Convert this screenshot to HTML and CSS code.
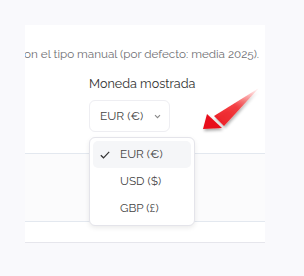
FILE: index.html
```html
<!DOCTYPE html>
<html lang="es">
<head>
  <meta charset="UTF-8" />
  <meta name="viewport" content="width=device-width, initial-scale=1" />
  <title>Moneda mostrada</title>
  <link rel="stylesheet" href="styles.css">
</head>
<body>
  <div class="card">
    <div class="note"><span>on el tipo manual (por defecto: media 2025).</span></div>
    <div class="field">
      <div class="label">Moneda mostrada</div>
      <button class="select">
        <span>EUR (€)</span>
        <svg class="chev" width="7" height="5" viewBox="0 0 7 5"><path d="M1 1.2 L3.5 3.7 L6 1.2" fill="none" stroke="#888" stroke-width="1.1"/></svg>
      </button>
      <ul class="menu">
        <li class="active">
          <svg class="check" width="10" height="8" viewBox="0 0 10 8"><path d="M0.8 4.2 L3.5 6.8 L9.2 0.8" fill="none" stroke="#333" stroke-width="1.2"/></svg>
          EUR (€)
        </li>
        <li>USD ($)</li>
        <li>GBP (£)</li>
      </ul>
    </div>
    <div class="band"></div>
    <div class="foot"></div>
  </div>

  <svg class="arrow" width="70" height="56" viewBox="0 0 70 56">
    <defs>
      <linearGradient id="g" x1="64" y1="6" x2="12" y2="46" gradientUnits="userSpaceOnUse">
        <stop offset="0" stop-color="#ff3b3b" stop-opacity="0"/>
        <stop offset="0.45" stop-color="#f5262a" stop-opacity="0.85"/>
        <stop offset="1" stop-color="#e8111a"/>
      </linearGradient>
      <filter id="sh" x="-30%" y="-30%" width="160%" height="160%">
        <feGaussianBlur in="SourceAlpha" stdDeviation="1.6"/>
        <feOffset dx="1" dy="2"/>
        <feComponentTransfer><feFuncA type="linear" slope="0.35"/></feComponentTransfer>
        <feMerge><feMergeNode/><feMergeNode in="SourceGraphic"/></feMerge>
      </filter>
    </defs>
    <path d="M64 6 L19 34 L29 44 Z" fill="url(#g)" filter="url(#sh)"/>
    <path d="M8 47 L12 32 L27 46 Z" fill="#e8111a" filter="url(#sh)"/>
  </svg>
</body>
</html>
```

FILE: styles.css
```css
body {
  margin: 0;
  background: #f9f9fc;
  font-family: "Raleway", "Lato", "Open Sans", sans-serif;
  position: relative;
  height: 276px;
  overflow: hidden;
}

.card {
  margin: 25px 0 0 25px;
  width: 240px;
  background: #fff;
  overflow: hidden;
  position: relative;
}

.note {
  display: flex;
  justify-content: flex-end;
  padding: 21px 6px 0 0;
  line-height: 16px;
  font-size: 11.7px;
  color: #6f6f74;
  white-space: nowrap;
}

.field {
  position: relative;
  padding: 14px 0 0 64px;
}

.label {
  font-size: 12.6px;
  line-height: 16px;
  color: #333;
}

.select {
  margin-top: 8px;
  width: 81px;
  height: 32px;
  padding: 0 0 0 10px;
  display: flex;
  align-items: center;
  gap: 11px;
  background: #fff;
  border: 1px solid #eeeef2;
  border-radius: 6px;
  font-family: inherit;
  font-size: 12px;
  color: #444;
}

.chev {
  margin-top: 1px;
}

.menu {
  position: absolute;
  z-index: 2;
  left: 64px;
  top: 75px;
  width: 98px;
  margin: 0;
  padding: 3px;
  list-style: none;
  background: #fff;
  border: 1px solid #e4e4ea;
  border-radius: 6px;
  box-shadow: 0 2px 5px rgba(0, 0, 0, 0.08);
}

.menu li {
  position: relative;
  height: 27px;
  line-height: 27px;
  padding-left: 27px;
  border-radius: 5px;
  font-size: 11.8px;
  color: #444;
}

.menu li.active {
  background: #f5f6f8;
}

.check {
  position: absolute;
  left: 7px;
  top: 10px;
}

.band {
  margin-top: 21px;
  height: 67px;
  background: #fbfbfc;
  border-top: 1px solid #e3e8ef;
  border-bottom: 1px solid #e3e8ef;
}

.foot {
  height: 20px;
  border-bottom: 1px solid #e6e6ec;
}

.arrow {
  position: absolute;
  left: 195px;
  top: 82px;
}
```
